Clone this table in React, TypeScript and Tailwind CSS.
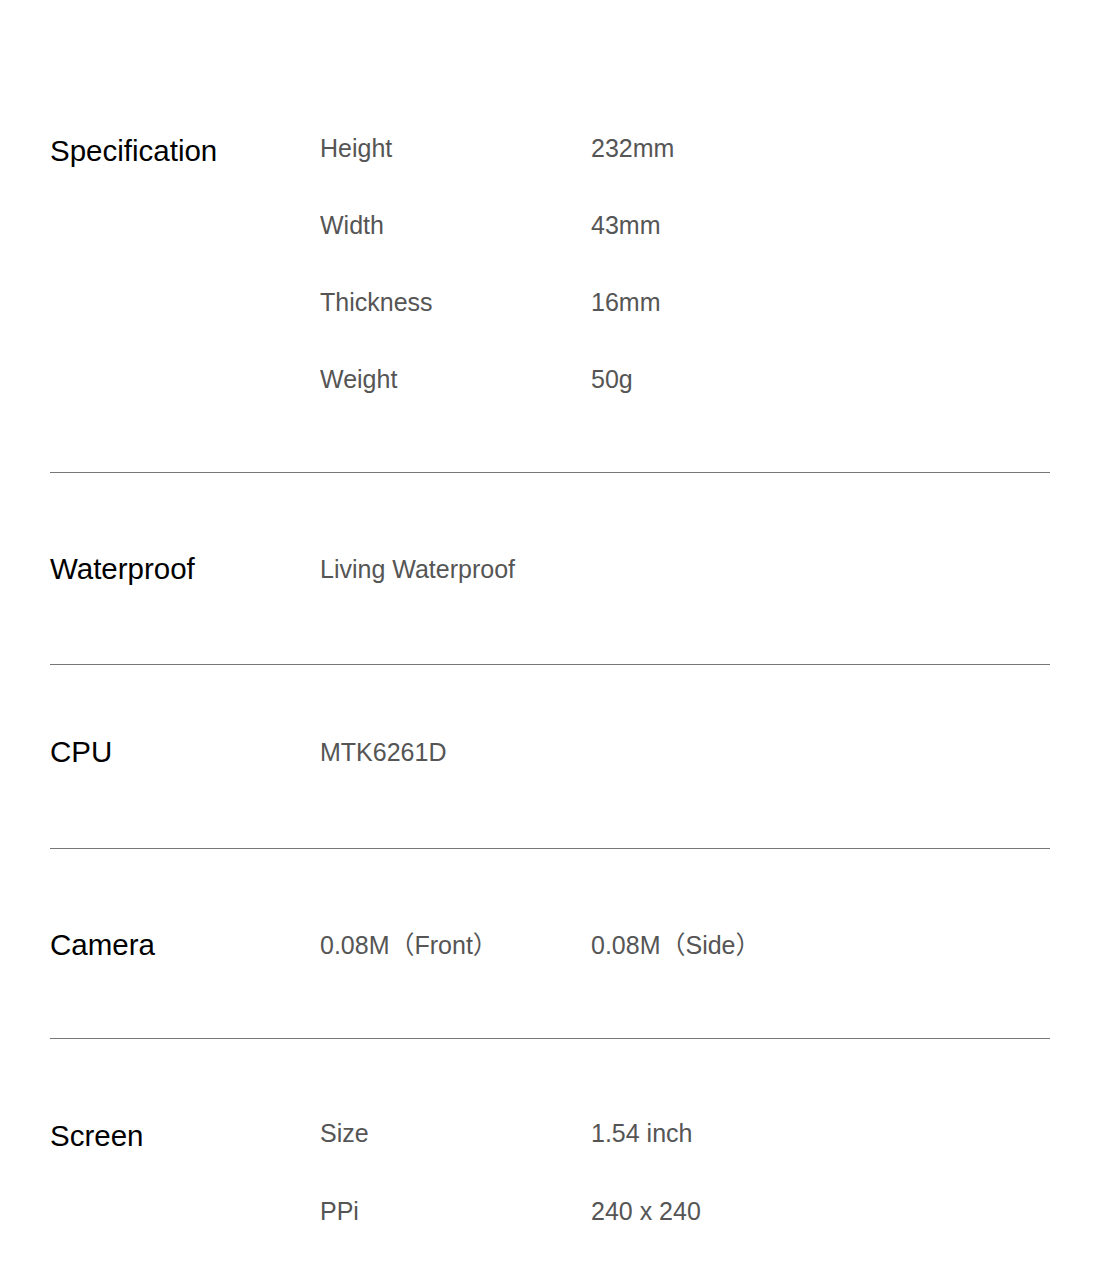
import React from "react"

type Row = { label: string; value?: string }

interface Section {
  title: string
  rows: Row[]
  pad: string
  gap?: string
}

const sections: Section[] = [
  {
    title: "Specification",
    pad: "pt-[130px] pb-[74px]",
    rows: [
      { label: "Height", value: "232mm" },
      { label: "Width", value: "43mm" },
      { label: "Thickness", value: "16mm" },
      { label: "Weight", value: "50g" },
    ],
  },
  {
    title: "Waterproof",
    pad: "pt-[75px] pb-[74px]",
    rows: [{ label: "Living Waterproof" }],
  },
  {
    title: "CPU",
    pad: "pt-[66px] pb-[75px]",
    rows: [{ label: "MTK6261D" }],
  },
  {
    title: "Camera",
    pad: "pt-[75px] pb-[72px]",
    rows: [{ label: "0.08M（Front）", value: "0.08M（Side）" }],
  },
  {
    title: "Screen",
    pad: "pt-[76px] pb-[36px]",
    gap: "gap-[41px]",
    rows: [
      { label: "Size", value: "1.54 inch" },
      { label: "PPi", value: "240 x 240" },
    ],
  },
]

export default function App() {
  return (
    <div
      className="min-h-screen bg-white px-[50px]"
      style={{ fontFamily: '"Liberation Sans", Arial, "Noto Sans CJK SC", sans-serif' }}
    >
      {sections.map((section, i) => (
        <div
          key={section.title}
          className={
            "grid grid-cols-[270px_1fr] " +
            (section.rows.length === 1 ? "items-center " : "items-start ") +
            section.pad +
            (i < sections.length - 1 ? " border-b border-[#777]" : "")
          }
        >
          <h2 className="text-[29.5px] leading-[42px] text-black">{section.title}</h2>
          <div className={"flex flex-col " + (section.gap ?? "gap-[40px]")}>
            {section.rows.map((row) => (
              <div
                key={row.label}
                className="grid grid-cols-[271px_1fr] text-[25px] leading-[37px] text-[#555]"
              >
                <span>{row.label}</span>
                {row.value && <span>{row.value}</span>}
              </div>
            ))}
          </div>
        </div>
      ))}
    </div>
  )
}
